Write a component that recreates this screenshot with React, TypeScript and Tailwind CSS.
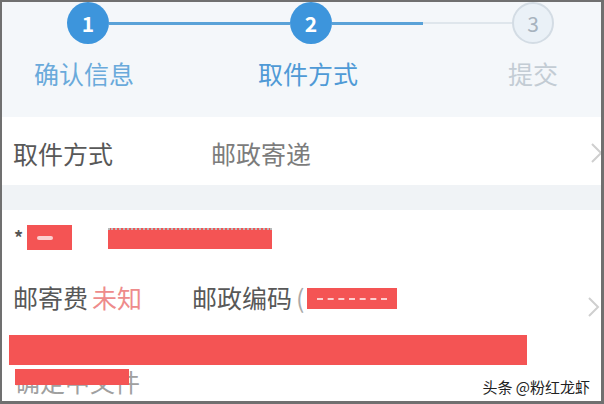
const font = { fontFamily: '"Noto Sans CJK SC", "Noto Sans", sans-serif' };

function Chevron({ className = "" }: { className?: string }) {
  return (
    <svg width="13" height="22" viewBox="0 0 13 22" className={className}>
      <path d="M2 2 L11 11 L2 20" fill="none" stroke="#cfcfcf" strokeWidth="2" />
    </svg>
  );
}

function Step({ n, done }: { n: number; done: boolean }) {
  return done ? (
    <div className="w-[42px] h-[42px] shrink-0 rounded-full bg-[#3d95dc] flex items-center justify-center text-white text-[21px] font-bold leading-none">
      {n}
    </div>
  ) : (
    <div className="w-[42px] h-[42px] shrink-0 rounded-full bg-[#eaf1f7] border-2 border-[#d3dce4] flex items-center justify-center text-[#a7b3be] text-[21px] leading-none">
      {n}
    </div>
  );
}

export default function App() {
  return (
    <div className="w-[604px] h-[404px] bg-[#707070] pl-[2px] pt-[2px] pr-[3px] pb-[3px]" style={font}>
      <div className="relative w-full h-full overflow-hidden bg-white flex flex-col">
        {/* steps header */}
        <div className="h-[115px] shrink-0 bg-[#f4f7fa]">
          <div className="flex items-center h-[42px] pl-[65px]">
            <Step n={1} done />
            <div className="w-[181px] h-[3px] bg-[#5aa2d8]"></div>
            <Step n={2} done />
            <div className="w-[91px] h-[3px] bg-[#5aa2d8]"></div>
            <div className="w-[89px] h-[2px] bg-[#dfe6ec]"></div>
            <Step n={3} done={false} />
          </div>
          <div className="flex mt-[17px] pl-[32px] text-[25px] leading-none">
            <span className="w-[100px] text-[#6aaadb]">确认信息</span>
            <span className="ml-[124px] w-[100px] text-[#4f9ad6]">取件方式</span>
            <span className="ml-[150px] text-[#c3ccd4]">提交</span>
          </div>
        </div>

        {/* pickup method */}
        <div className="h-[68px] shrink-0 flex items-center pl-[11px] pt-[4px] text-[25px] leading-none">
          <span className="w-[100px] text-[#585858]">取件方式</span>
          <span className="ml-[98px] text-[#7c7c7c]">邮政寄递</span>
          <Chevron className="ml-auto -mr-[2px]" />
        </div>

        <div className="h-[25px] shrink-0 bg-[#f0f3f6]"></div>

        {/* contact */}
        <div className="h-[40px] shrink-0 flex items-start pt-[15px] pl-[12px]">
          <span className="w-[13px] mt-[3px] text-[18px] font-bold leading-none text-[#555]">*</span>
          <div className="w-[45px] h-[25px] bg-[#f45454] flex items-center pl-[10px]">
            <div className="w-[16px] h-[4px] rounded-sm bg-[#fbd0d0]"></div>
          </div>
          <div className="ml-[36px] mt-[3px] w-[164px] h-[21px] bg-[#f45454] border-t-2 border-dotted border-[#b8b8b8]"></div>
        </div>

        {/* postage */}
        <div className="mt-[35px] h-[25px] shrink-0 flex items-start pl-[11px] text-[25px] leading-none">
          <span className="text-[#585858]">邮寄费</span>
          <span className="ml-[4px] text-[#ee8b8b]">未知</span>
          <span className="ml-[50px] text-[#585858]">邮政编码</span>
          <span className="ml-[4px] text-[#aaa]">(</span>
          <div className="ml-[2px] mt-[3px] w-[90px] h-[21px] bg-[#f45454] flex items-center justify-center">
            <div className="w-[70px] border-t-2 border-dashed border-[#fbd0d0]"></div>
          </div>
          <Chevron className="ml-auto mr-[1px] mt-[11px]" />
        </div>

        {/* address */}
        <div className="mt-[25px] ml-[7px] w-[518px] h-[30px] shrink-0 bg-[#f45454]"></div>
        <div className="relative mt-[4px] ml-[13px] shrink-0 text-[25px] leading-none text-[#a0a0a0]">
          <span>确定中文件</span>
          <div className="absolute top-0 left-0 w-[114px] h-[16px] bg-[#f45454]"></div>
        </div>

        {/* watermark */}
        <div className="absolute right-[11px] bottom-[7px] text-[15px] leading-none text-[#222] [text-shadow:0_0_2px_#fff]">
          头条 @粉红龙虾
        </div>
      </div>
    </div>
  );
}
